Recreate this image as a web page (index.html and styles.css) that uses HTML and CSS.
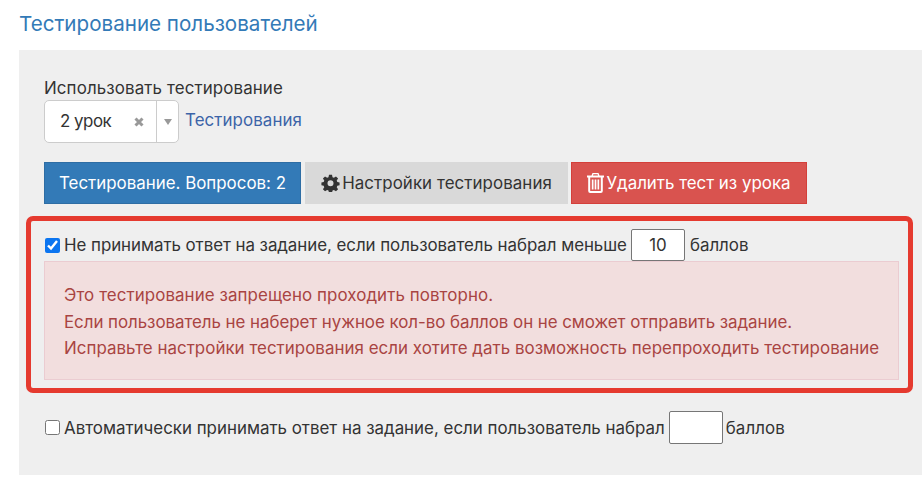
FILE: index.html
```html
<!DOCTYPE html>
<html lang="ru">
<head>
<meta charset="utf-8">
<title>Тестирование пользователей</title>
<link rel="stylesheet" href="styles.css">
</head>
<body>
<h2 class="title">Тестирование пользователей</h2>
<section class="panel">
  <div class="field-label">Использовать тестирование</div>
  <div class="select-row">
    <div class="select">
      <span class="select-value">2 урок</span>
      <span class="select-clear"><svg width="10" height="10" viewBox="0 0 10 10"><path d="M1.500 1.500l7 7M8.500 1.500l-7 7" stroke="#999" stroke-width="3" fill="none"/></svg></span>
      <span class="select-arrow"><svg width="8" height="6" viewBox="0 0 8 6"><path d="M0 0h8L4 6z" fill="#999"/></svg></span>
    </div>
    <a class="link">Тестирования</a>
  </div>
  <div class="buttons">
    <button class="btn btn-primary">Тестирование. Вопросов: 2</button>
    <button class="btn btn-default"><svg class="icon" width="19" height="18" viewBox="0 0 24 24"><path fill="#333" fill-rule="evenodd" d="M10 1h4l.7 3.200 1.800.8 2.800-1.800 2.800 2.800L20.300 8.800l.8 1.800 3 .6v3.900l-3 .7-.8 1.800 1.800 2.700-2.800 2.800-2.800-1.800-1.800.8-.7 3h-4l-.7-3-1.800-.8-2.800 1.800-2.800-2.800 1.800-2.700-.8-1.800-3-.7v-3.900l3-.6.8-1.800-1.800-2.800 2.800-2.800L7.500 5l1.800-.8zM12 8.300a4 4 0 1 0 0 8 4 4 0 0 0 0-8z"/></svg>Настройки тестирования</button>
    <button class="btn btn-danger"><svg class="icon" width="17" height="20" viewBox="0 0 17 20"><path fill="#fff" fill-rule="evenodd" d="M5.500 0h6l1 2.500H17v2h-1.200V18a2 2 0 0 1-2 2H3.200a2 2 0 0 1-2-2V4.500H0v-2h4.500zM6.400 1.300l-.4 1.200h5l-.4-1.200zM3.200 4.500V18h10.600V4.500zM4.800 6.500h1.700v10H4.800zM7.650 6.500h1.700v10H7.650zM10.500 6.500h1.700v10h-1.700z"/></svg>Удалить тест из урока</button>
  </div>
  <div class="highlight"></div>
  <label class="check-row check-row-first">
    <input type="checkbox" class="check" checked>
    <span class="tight">Не принимать ответ на задание, если пользователь набрал меньше</span>
    <input type="text" class="score" value="10">
    <span>баллов</span>
  </label>
  <div class="alert">
    <p class="wide">Это тестирование запрещено проходить повторно.</p>
    <p class="tight">Если пользователь не наберет нужное кол-во баллов он не сможет отправить задание.</p>
    <p class="wide-slight">Исправьте настройки тестирования если хотите дать возможность перепроходить тестирование</p>
  </div>
  <label class="check-row check-row-last">
    <input type="checkbox" class="check">
    <span>Автоматически принимать ответ на задание, если пользователь набрал</span>
    <input type="text" class="score">
    <span class="last-unit">баллов</span>
  </label>
</section>
</body>
</html>
```

FILE: styles.css
```css
* { box-sizing: border-box; }
html, body { margin: 0; padding: 0; }
body {
  height: 485px;
  overflow: hidden;
  background: #fff;
  color: #333;
  font-family: Inter, "Noto Sans", sans-serif;
  font-size: 16.900px;
  line-height: 24px;
  padding-left: 19px;
}
.title {
  margin: 0;
  height: 50px;
  padding-top: 10px;
  font-size: 20.600px;
  line-height: 28px;
  font-weight: 400;
  color: #337ab7;
}
.panel {
  position: relative;
  height: 425px;
  background: #efefef;
  padding: 26px 23px 0 25px;
}
.field-label { height: 24px; letter-spacing: 0.120px; }
.select-row {
  display: flex;
  align-items: center;
  gap: 6px;
  height: 43px;
}
.select {
  display: flex;
  align-items: center;
  width: 135px;
  height: 43px;
  background: #fff;
  border: 1px solid #ccc;
  border-radius: 5px;
}
.select-value { flex: 1; padding-left: 15px; margin-top: -2px; letter-spacing: -0.500px; }
.select-clear { display: flex; width: 22px; }
.select-arrow {
  display: flex;
  align-items: center;
  justify-content: center;
  width: 22px;
  height: 100%;
  border-left: 1px solid #ccc;
}
.link { color: #3c64a8; margin-top: -3px; letter-spacing: 0.080px; }
.buttons {
  display: flex;
  gap: 4px;
  margin-top: 19px;
}
.btn {
  display: flex;
  align-items: center;
  justify-content: center;
  height: 42px;
  font: inherit;
  border: 1px solid transparent;
  padding: 0;
}
.btn-primary { width: 257px; background: #337ab7; border-color: #2e6da4; color: #fff; }
.btn-default { width: 263px; background: #d9d9d9; border-color: #d9d9d9; color: #333; letter-spacing: 0.070px; }
.btn-danger { width: 236px; margin-left: -1px; background: #d9534f; border-color: #d43f3a; color: #fff; }
.icon { margin-right: 2px; flex: none; }
.highlight {
  position: absolute;
  left: 7px;
  top: 166px;
  width: 887px;
  height: 177px;
  border: 5px solid #e53a2f;
  border-radius: 7px;
  pointer-events: none;
}
.check-row {
  display: flex;
  align-items: center;
}
.check-row-first { margin-top: 25px; height: 32px; }
.check-row-last { margin-top: 31px; height: 33px; }
.check {
  width: 15px;
  height: 15px;
  margin: 0 4px 0 1px;
  flex: none;
  accent-color: #0b75f0;
}
.score {
  width: 54px;
  height: 100%;
  margin: 0 5px 0 4px;
  font: inherit;
  text-align: center;
  color: #333;
  background: #fff;
  border: 1px solid #767676;
  border-radius: 2px;
  padding: 0 2px;
}
.alert {
  height: 119px;
  padding: 20px 0 0 19px;
  background: #f2dede;
  border: 1px solid #ebccd1;
  color: #a94442;
  white-space: nowrap;
}
.alert p { margin: 0; height: 26.500px; line-height: 26px; }
.alert .tight { letter-spacing: -0.040px; }
.alert .wide { letter-spacing: 0.085px; }
.alert .wide-slight { letter-spacing: 0.035px; }
.tight { letter-spacing: -0.050px; }
.last-unit { margin-left: -2px; letter-spacing: 0.100px; }
```
